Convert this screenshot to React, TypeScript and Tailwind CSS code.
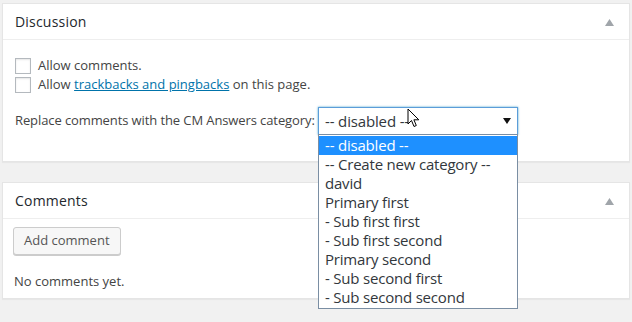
import React from 'react';

const options = [
	'-- disabled --',
	'-- Create new category --',
	'david',
	'Primary first',
	'- Sub first first',
	'- Sub first second',
	'Primary second',
	'- Sub second first',
	'- Sub second second'
];

function Toggle() {
	return (
		<svg width="9" height="7" viewBox="0 0 9 7" className="block">
			<path d="M4.5 0 L9 7 L0 7 Z" fill="#a0a5aa" />
		</svg>
	);
}

function Checkbox() {
	return <span className="block w-[16px] h-[16px] border border-[#b4b9be] bg-white shadow-[inset_0_1px_2px_rgba(0,0,0,0.1)] mr-[7px]" />;
}

function PanelHeader({ title }: { title: string }) {
	return (
		<div className="flex items-center justify-between h-[36px] px-[12px] border-b border-[#eeeeee]">
			<h2 className="text-[14px] tracking-[0.2px] text-[#23282d]">{title}</h2>
			<span className="mr-[3px] mt-[2px]">
				<Toggle />
			</span>
		</div>
	);
}

function Pointer() {
	return (
		<svg width="14" height="20" viewBox="0 0 14 20" className="absolute left-[89px] top-[1px]">
			<path
				d="M1 1 L1 16 L4.5 12.5 L7 18.5 L9.3 17.5 L6.9 11.8 L11.8 11.8 Z"
				fill="white"
				stroke="black"
				strokeWidth="1"
				strokeLinejoin="round"
			/>
		</svg>
	);
}

export default function App() {
	return (
		<div
			className="w-[632px] h-[322px] bg-[#f1f1f1] pt-[3px] px-[2px] overflow-hidden text-[#444444]"
			style={{ fontFamily: '"Open Sans", sans-serif' }}
		>
			<div className="bg-white border border-[#e5e5e5] shadow-[0_1px_1px_rgba(0,0,0,0.04)]">
				<PanelHeader title="Discussion" />
				<div className="px-[12px] pt-[16px] pb-[26px] text-[13px]">
					<div className="flex items-center h-[19px]">
						<Checkbox />
						<span>Allow comments.</span>
					</div>
					<div className="flex items-center h-[19px]">
						<Checkbox />
						<span>
							Allow{' '}
							<a className="text-[#0073aa] underline" href="#">
								trackbacks and pingbacks
							</a>{' '}
							on this page.
						</span>
					</div>
					<div className="flex items-center mt-[13px]">
						<span className="w-[303px] shrink-0 whitespace-nowrap tracking-[-0.1px]">
							Replace comments with the CM Answers category:
						</span>
						<div className="relative">
							<div className="flex items-center justify-between w-[200px] h-[28px] border border-[#5b9dd9] shadow-[0_0_2px_rgba(30,140,190,0.8)] bg-white pl-[6px] pr-[6px] text-[15px] tracking-[-0.15px] text-[#32373c]">
								<span>-- disabled --</span>
								<svg width="8" height="6" viewBox="0 0 8 6">
									<path d="M0 0 L8 0 L4 6 Z" fill="#111" />
								</svg>
							</div>
							<Pointer />
							<ul className="absolute left-0 top-[27px] w-[200px] border border-[#7a8ea3] bg-white z-10 py-[1px] text-[15px] tracking-[-0.2px] text-[#32373c]">
								{options.map((o, i) => (
									<li
										key={o}
										className={`h-[19px] leading-[19px] pl-[6px] ${i === 0 ? 'bg-[#1e90ff] text-white' : ''}`}
									>
										{o}
									</li>
								))}
							</ul>
						</div>
					</div>
				</div>
			</div>

			<div className="mt-[20px] bg-white border border-[#e5e5e5] shadow-[0_1px_1px_rgba(0,0,0,0.04)]">
				<PanelHeader title="Comments" />
				<div className="pl-[10px] pr-[12px] pt-[8px] pb-[8px] text-[13px]">
					<button className="h-[28px] px-[10px] border border-[#cccccc] rounded-[3px] bg-[#f7f7f7] text-[#555555] shadow-[0_1px_0_#cccccc] text-[13px]">
						Add comment
					</button>
					<p className="mt-[17px] ml-[1px] leading-[18px]">No comments yet.</p>
				</div>
			</div>
		</div>
	);
}
